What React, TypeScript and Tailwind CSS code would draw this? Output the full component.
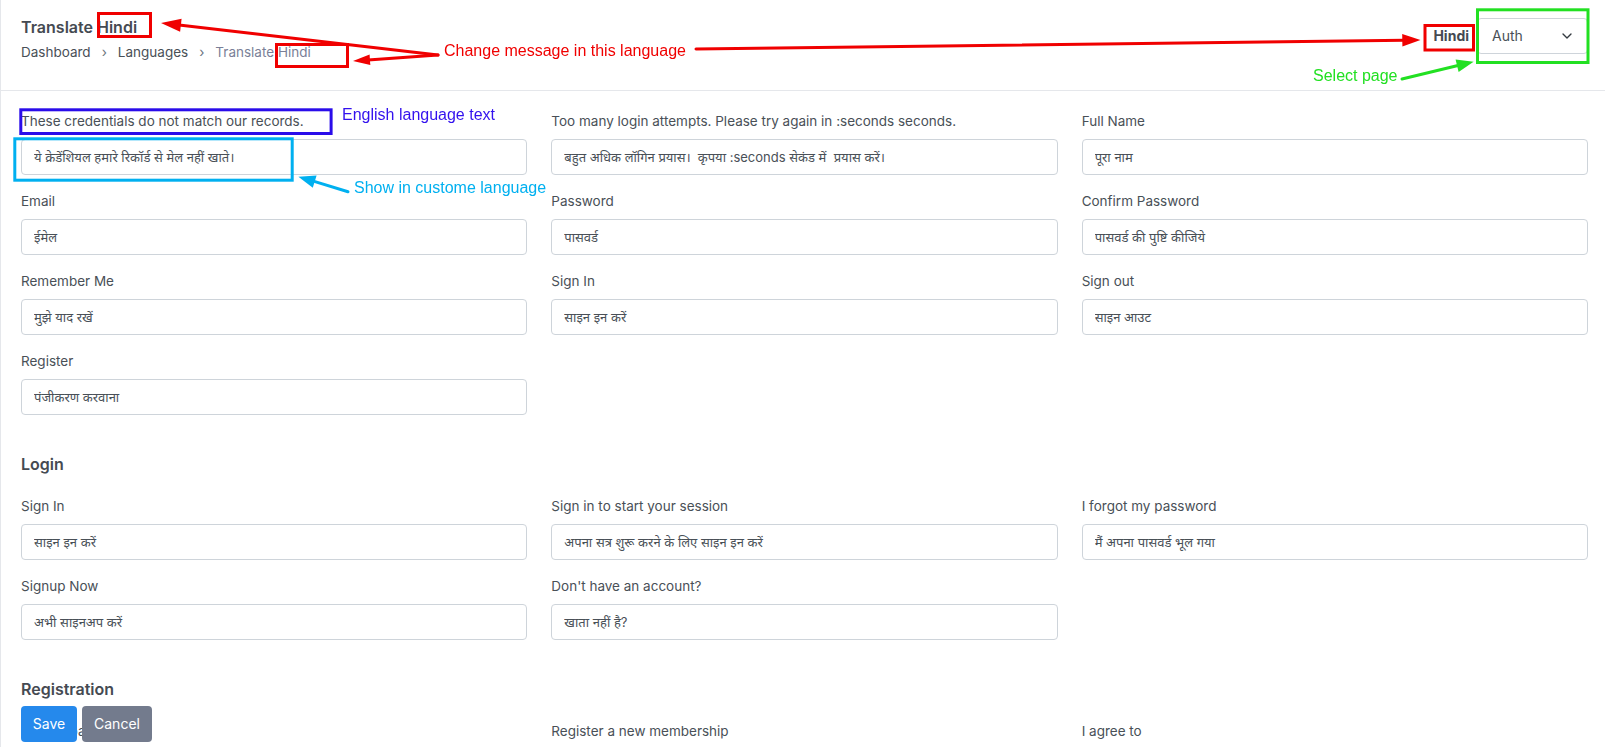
import { ChevronDown } from 'lucide-react';

type Pair = [string, string];

const general: Pair[] = [
  ['These credentials do not match our records.', 'ये क्रेडेंशियल हमारे रिकॉर्ड से मेल नहीं खाते।'],
  ['Too many login attempts. Please try again in :seconds seconds.', 'बहुत अधिक लॉगिन प्रयास।  कृपया :seconds सेकंड में  प्रयास करें।'],
  ['Full Name', 'पूरा नाम'],
  ['Email', 'ईमेल'],
  ['Password', 'पासवर्ड'],
  ['Confirm Password', 'पासवर्ड की पुष्टि कीजिये'],
  ['Remember Me', 'मुझे याद रखें'],
  ['Sign In', 'साइन इन करें'],
  ['Sign out', 'साइन आउट'],
  ['Register', 'पंजीकरण करवाना'],
];

const login: Pair[] = [
  ['Sign In', 'साइन इन करें'],
  ['Sign in to start your session', 'अपना सत्र शुरू करने के लिए साइन इन करें'],
  ['I forgot my password', 'मैं अपना पासवर्ड भूल गया'],
  ['Signup Now', 'अभी साइनअप करें'],
  ["Don't have an account?", 'खाता नहीं है?'],
];

const registration: Pair[] = [
  ['Retype password', 'पासवर्ड फिर से लिखें'],
  ['Register a new membership', 'नई सदस्यता पंजीकृत करें'],
  ['I agree to', 'मैं सहमत हूँ'],
];

function Field({ label, value }: { label: string; value: string }) {
  return (
    <div className="mb-4">
      <label className="mb-2 block text-[13.5px] leading-5 text-[#495057]">{label}</label>
      <input
        defaultValue={value}
        className="block h-9 w-full rounded-[4px] border border-[#ced4da] bg-white px-3 text-[13px] text-[#495057] outline-none"
      />
    </div>
  );
}

function Section({ title, items }: { title?: string; items: Pair[] }) {
  return (
    <section>
      {title && (
        <h5 className="mb-5 mt-[21px] text-base font-semibold leading-6 text-[#454a52]">{title}</h5>
      )}
      <div className="grid grid-cols-3 gap-x-6">
        {items.map(([label, value], i) => (
          <Field key={i} label={label} value={value} />
        ))}
      </div>
    </section>
  );
}

// callout layer drawn on top of the page
function Annotations() {
  return (
    <div className="pointer-events-none absolute left-0 top-0 h-[747px] w-[1605px]">
      <svg width="1605" height="747" className="absolute left-0 top-0">
        <g fill="none" strokeWidth="3">
          <rect x="97.5" y="13.5" width="52" height="23" stroke="#f00000" />
          <rect x="275.5" y="44.5" width="71" height="22" stroke="#f00000" />
          <rect x="1424" y="25.5" width="48.5" height="24.5" stroke="#f00000" />
          <rect x="1476.5" y="9.8" width="110.5" height="52.7" stroke="#22e022" />
          <rect x="19.8" y="109.8" width="310.3" height="23.7" stroke="#2a0cea" />
          <rect x="13.8" y="138.8" width="277.4" height="41.4" stroke="#00b0f0" />
        </g>
        <g strokeWidth="3" strokeLinecap="round">
          <line x1="437" y1="55" x2="178" y2="25" stroke="#f00000" />
          <line x1="437" y1="55" x2="367" y2="60" stroke="#f00000" />
          <line x1="695" y1="49" x2="1403" y2="40.2" stroke="#f00000" />
          <line x1="1401" y1="79" x2="1458" y2="65.3" stroke="#22e022" />
          <line x1="347" y1="191.7" x2="314" y2="181.6" stroke="#00b0f0" />
        </g>
        <polygon points="160,23 180.6,18.8 179.1,31.8" fill="#f00000" />
        <polygon points="352,61 368.6,54.5 369.3,65.1" fill="#f00000" />
        <polygon points="1419.5,40 1401.2,33.9 1401.4,46.5" fill="#f00000" />
        <polygon points="1472.6,61.7 1457.6,72 1454.6,59.4" fill="#22e022" />
        <polygon points="297.4,176.7 315.6,175.4 311.8,187.8" fill="#00b0f0" />
      </svg>
      <span className="absolute left-[443px] top-[42px] whitespace-nowrap font-['Liberation_Sans',Arial,sans-serif] text-base leading-[18px] text-[#f00000]">
        Change message in this language
      </span>
      <span className="absolute left-[341px] top-[106px] whitespace-nowrap font-['Liberation_Sans',Arial,sans-serif] text-base leading-[18px] text-[#3311ee]">
        English language text
      </span>
      <span className="absolute left-[353px] top-[179px] whitespace-nowrap font-['Liberation_Sans',Arial,sans-serif] text-base leading-[18px] text-[#00b0f0]">
        Show in custome language
      </span>
      <span className="absolute left-[1312px] top-[67px] whitespace-nowrap font-['Liberation_Sans',Arial,sans-serif] text-base leading-[18px] text-[#22e022]">
        Select page
      </span>
    </div>
  );
}

export default function App() {
  return (
    <div className="relative min-h-screen overflow-hidden border-l border-[#e5e7eb] bg-white font-['Inter','Noto_Sans',sans-serif]">
      <header className="flex h-[91px] justify-between border-b border-[#e5e7eb] pl-5 pr-[17px]">
        <div className="pt-[15px]">
          <h1 className="text-base font-semibold leading-6 text-[#454a52]">Translate Hindi</h1>
          <nav className="mt-[3px] flex text-[13.5px] leading-5 text-[#495057]">
            <span>Dashboard</span>
            <span className="px-[11px] text-[#6c757d]">›</span>
            <span>Languages</span>
            <span className="px-[11px] text-[#6c757d]">›</span>
            <span className="text-[#7a7f97]">Translate Hindi</span>
          </nav>
        </div>
        <div className="mt-[18px] flex h-9 items-center gap-2">
          <span className="text-sm font-bold text-[#454a52]">Hindi</span>
          <div className="flex h-9 w-[111px] items-center justify-between rounded-[4px] border border-[#ced4da] pl-3.5 pr-3 text-sm text-[#495057]">
            <span>Auth</span>
            <ChevronDown size={16} strokeWidth={2} className="text-[#343a40]" />
          </div>
        </div>
      </header>

      <main className="pl-5 pr-[17px] pt-5">
        <Section items={general} />
        <Section title="Login" items={login} />
        <Section title="Registration" items={registration} />
      </main>

      <div className="fixed bottom-[5px] left-[21px] flex gap-[5px]">
        <button className="h-9 w-[56px] rounded-[4px] bg-[#2589ec] text-sm text-white">Save</button>
        <button className="h-9 w-[70px] rounded-[4px] bg-[#737b8d] text-sm text-white">Cancel</button>
      </div>

      <Annotations />
    </div>
  );
}
